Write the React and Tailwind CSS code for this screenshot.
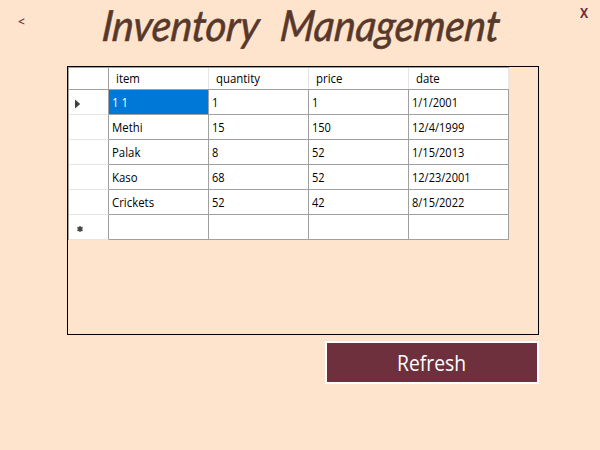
const columns = ["item", "quantity", "price", "date"];

const rows = [
  ["1 1", "1", "1", "1/1/2001"],
  ["Methi", "15", "150", "12/4/1999"],
  ["Palak", "8", "52", "1/15/2013"],
  ["Kaso", "68", "52", "12/23/2001"],
  ["Crickets", "52", "42", "8/15/2022"],
  ["", "", "", ""],
];

function RowMarker({ index }) {
  if (index === 0) {
    return (
      <svg width="6" height="10" viewBox="0 0 6 10" className="ml-[6px] mt-[3px]">
        <path d="M0 0.5 L5.2 5 L0 9.5 Z" fill="#404040" />
      </svg>
    );
  }
  if (index === rows.length - 1) {
    return (
      <svg width="6" height="6" viewBox="0 0 6 6" className="ml-[8px] mt-[4px]">
        <circle cx="3" cy="3" r="2.5" fill="#484848" />
        <path d="M3 0V6M0.3 1.2L5.7 4.8M5.7 1.2L0.3 4.8" stroke="#484848" strokeWidth="1" />
      </svg>
    );
  }
  return null;
}

export default function App() {
  return (
    <div className="flex h-[450px] w-[600px] flex-col overflow-hidden bg-[#fee4cc] font-['Open_Sans','Noto_Sans',sans-serif] text-black">
      <header className="flex h-[66px] shrink-0 items-start">
        <button className="ml-[18px] mt-[13px] w-[83px] text-left text-[12px] font-semibold leading-[17px] text-[#6e303c]">&lt;</button>
        <h1 className="flex h-[66px] w-[401px] font-['Lato',sans-serif] text-[43px] italic leading-[50px] text-[#57382b] [-webkit-text-stroke:0.6px_#57382b]">
          <span className="w-[178px] origin-[0_40px] -skew-x-6 scale-x-[0.93] whitespace-nowrap">Inventory</span>
          <span className="w-[223px] origin-[0_40px] -skew-x-6 scale-x-[0.93] whitespace-nowrap">Management</span>
        </h1>
        <button className="ml-[78px] mt-[4px] text-[14px] font-bold leading-[18px] text-[#6e303c]">
          <span className="inline-block origin-left scale-x-[0.87]">X</span>
        </button>
      </header>

      <main className="ml-[67px] h-[269px] w-[472px] shrink-0 border border-black">
        <div className="w-[441px] border-l border-t border-[#a0a0a0] bg-white text-[12px]">
          <div className="flex h-[22px] border-b border-[#a0a0a0]">
            <div className="w-[40px] border-r border-[#a0a0a0]" />
            {columns.map((name) => (
              <div key={name} className="w-[100px] border-r border-[#e5e5e5] pl-[7px] leading-[21px]">
                <span className="inline-block origin-left scale-x-[0.95]">{name}</span>
              </div>
            ))}
          </div>
          {rows.map((row, r) => (
            <div key={r} className="flex h-[25px]">
              <div className="flex w-[40px] items-center border-b border-r border-b-[#e5e5e5] border-r-[#a0a0a0]">
                <RowMarker index={r} />
              </div>
              {row.map((value, c) => (
                <div
                  key={c}
                  className={`w-[100px] border-b border-r border-[#a0a0a0] pl-[3px] leading-[25px] ${
                    r === 0 && c === 0 ? "bg-[#0078d7] text-white" : ""
                  }`}
                >
                  <span className={`inline-block origin-left ${c === 0 ? "scale-x-[0.95]" : "scale-x-[0.92]"}`}>{value}</span>
                </div>
              ))}
            </div>
          ))}
        </div>
      </main>

      <button className="ml-[325px] mt-[6px] h-[43px] w-[214px] shrink-0 border-2 border-white bg-[#6e303c] text-center text-[21px] leading-[41px] text-white">
        <span className="-mt-px inline-block origin-center scale-x-[0.92]">Refresh</span>
      </button>
    </div>
  );
}
